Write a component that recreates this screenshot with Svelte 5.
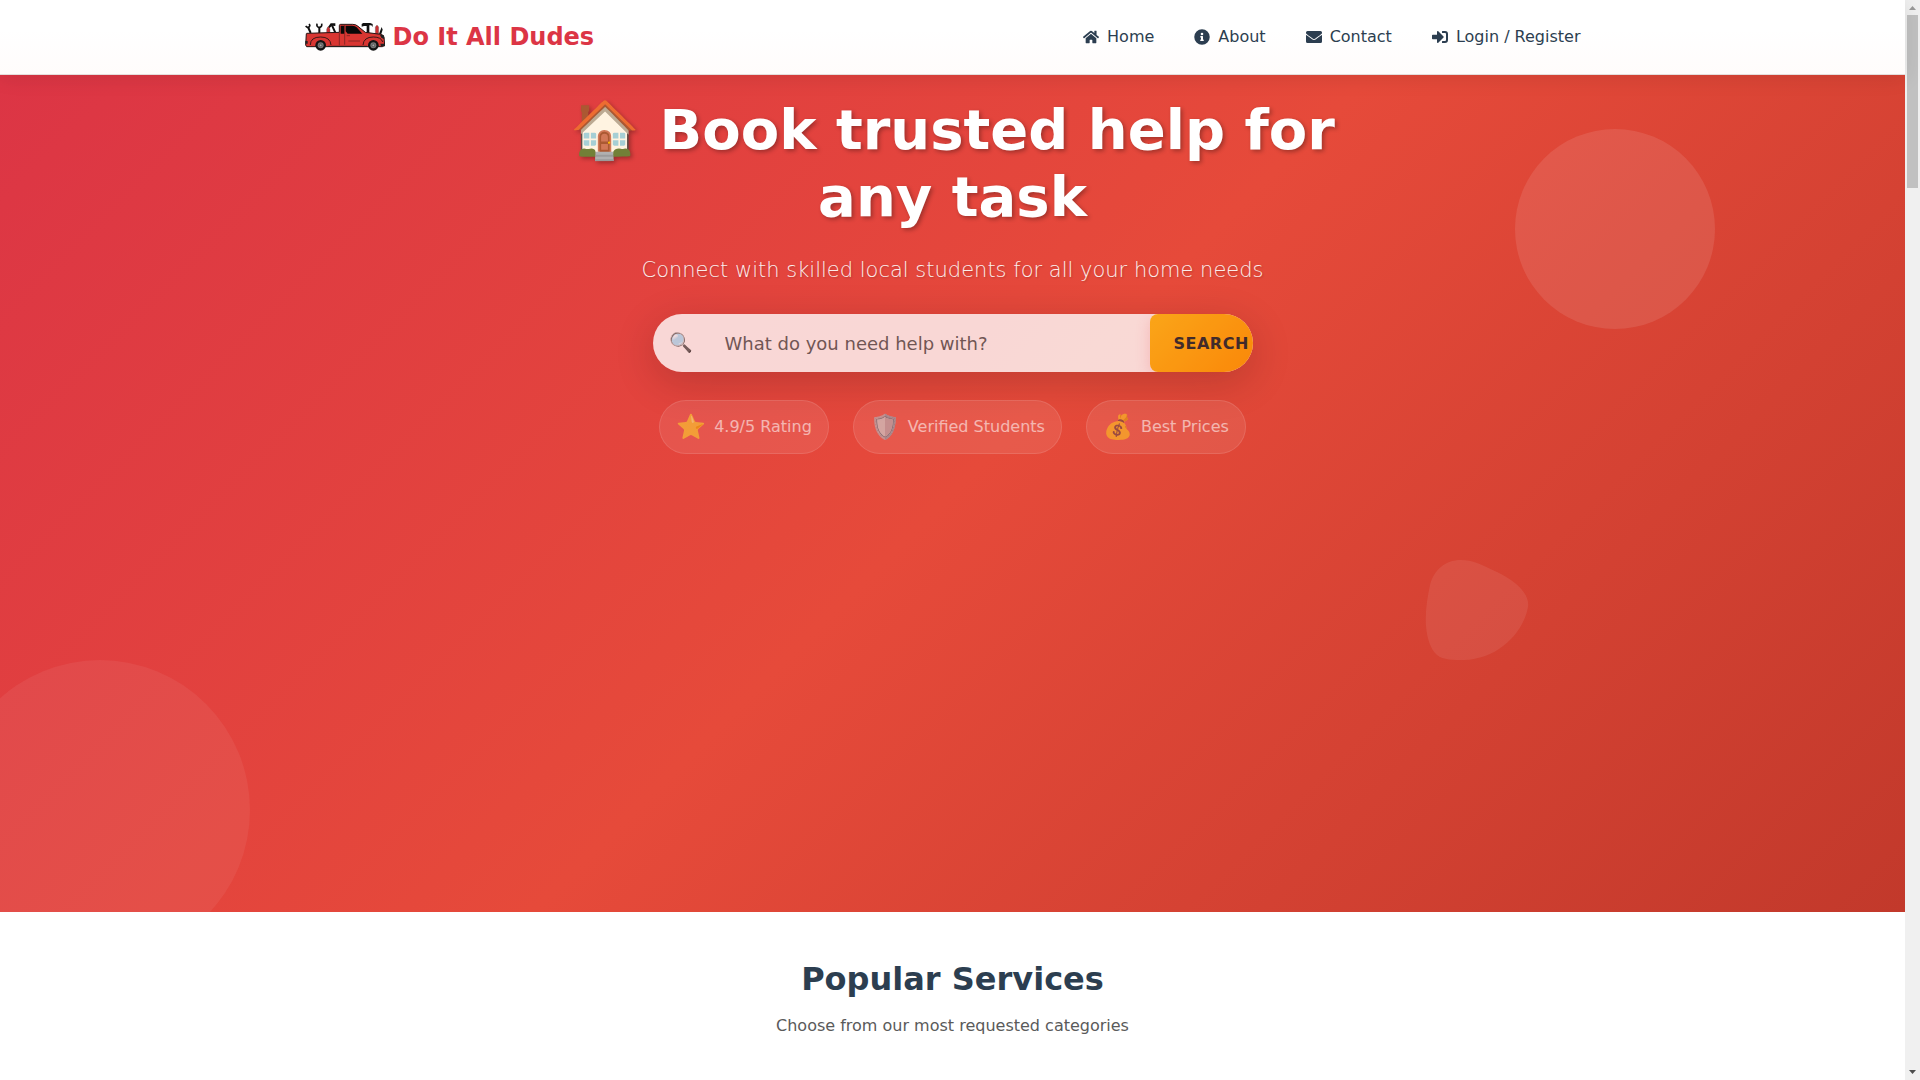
<script>
  let query = '';

  const links = [
    {
      label: 'Home',
      box: '0 0 576 512',
      path: 'M280 148 96 300v164a16 16 0 0 0 16 16l112-1a16 16 0 0 0 16-16v-95a16 16 0 0 1 16-16h64a16 16 0 0 1 16 16v95a16 16 0 0 0 16 16l112 1a16 16 0 0 0 16-16V300L296 148a12 12 0 0 0-16 0zM572 251l-84-69V44a12 12 0 0 0-12-12h-56a12 12 0 0 0-12 12v72l-90-74a48 48 0 0 0-61 0L4 251a12 12 0 0 0-2 17l26 31a12 12 0 0 0 17 2L280 107a12 12 0 0 1 16 0l235 194a12 12 0 0 0 17-2l26-31a12 12 0 0 0-2-17z',
    },
    {
      label: 'About',
      box: '0 0 512 512',
      path: 'M256 8a248 248 0 1 0 0 496 248 248 0 0 0 0-496zm0 110a42 42 0 1 1 0 84 42 42 0 0 1 0-84zm56 254a12 12 0 0 1-12 12h-88a12 12 0 0 1-12-12v-24a12 12 0 0 1 12-12h12v-64h-12a12 12 0 0 1-12-12v-24a12 12 0 0 1 12-12h64a12 12 0 0 1 12 12v100h12a12 12 0 0 1 12 12z',
    },
    {
      label: 'Contact',
      box: '0 0 512 512',
      path: 'M502 191c4-3 10 0 10 5v204a48 48 0 0 1-48 48H48a48 48 0 0 1-48-48V196c0-5 6-8 10-5 22 17 52 40 155 114 21 15 57 48 91 48 35 0 72-34 91-48 103-74 133-97 155-114zM256 320c23 0 57-29 74-42 133-96 143-105 173-129 6-4 9-11 9-18V112a48 48 0 0 0-48-48H48a48 48 0 0 0-48 48v19c0 7 3 14 9 18 30 24 40 33 173 129 17 13 51 42 74 42z',
    },
    {
      label: 'Login / Register',
      box: '0 0 512 512',
      path: 'M416 448h-84a12 12 0 0 1-12-12v-40a12 12 0 0 1 12-12h84a32 32 0 0 0 32-32V160a32 32 0 0 0-32-32h-84a12 12 0 0 1-12-12V76a12 12 0 0 1 12-12h84a96 96 0 0 1 96 96v192a96 96 0 0 1-96 96zm-47-209L201 71c-15-15-41-5-41 17v96H24a24 24 0 0 0-24 24v96a24 24 0 0 0 24 24h136v96c0 22 26 32 41 17l168-168c9-9 9-25 0-34z',
    },
  ];

  const badges = [
    { icon: '⭐', text: '4.9/5 Rating' },
    { icon: '🛡️', text: 'Verified Students' },
    { icon: '💰', text: 'Best Prices' },
  ];
</script>

<div class="window">
  <div class="page">
    <header>
      <nav class="container">
        <a class="brand" href="#home">
          <svg class="truck" viewBox="0 0 240 84" aria-hidden="true">
            <!-- tools in the bed -->
            <g fill="none" stroke="#111" stroke-width="6">
              <path d="M9 12 17 30M43 12v18M81 7l11 24" />
              <path d="M2 9q5 6 10 3 5-4 0-9M36 2q-2 11 7 11 9-1 7-11" stroke-width="5" />
            </g>
            <path d="M67 15 77 1h14v8l-10-1-8 8zM170 3l6-4h17l10 4v9l-4-5h-6v26h-8V9h-8l-7 2z" fill="#111" />
            <path d="M65 30V18l5-8 5 8v12zM211 33V12l5-6 5 6v22z" fill="#c92f32" stroke="#555" />
            <path d="m222 32 8-20 3 8-5 16z" fill="#111" />
            <!-- body -->
            <path d="M5 31 103 28V8q0-4 4-4h36q10 0 16 6l22 18 46 6q8 1 10 8l2 25-7 4H5L2 66 4 32z" fill="#d93632" stroke="#251515" stroke-width="3" />
            <path d="M107 8h11v24h-11zM122 8h20q9 0 13 5l17 19h-44l-6-7z" fill="#080808" />
            <path d="M119 5v60M103 30v37M125 38h10M130 54h35" fill="none" stroke="#641f20" stroke-width="2" />
            <path d="M16 66q0-24 31-24 29 0 31 24M174 66q2-24 31-24 24 0 28 15" fill="none" stroke="#3a1818" stroke-width="3" />
            <path d="M225 36h11l2 13-9-5zM1 54h7v8H1zM226 62h14v8h-12z" fill="#222" />
            <path d="M70 70h116" stroke="#222" stroke-width="3" />
            {#each [47, 205] as cx}
              <circle {cx} cy="67" r="16" fill="#151515" />
              <circle {cx} cy="67" r="9" fill="#777" />
              <circle {cx} cy="67" r="4" fill="#aaa" stroke="#444" stroke-width="2" />
            {/each}
          </svg>
          Do It All Dudes
        </a>
        <ul>
          {#each links as link}
            <li>
              <a href="#{link.label}">
                <svg viewBox={link.box} aria-hidden="true"><path d={link.path} /></svg>
                {link.label}
              </a>
            </li>
          {/each}
        </ul>
      </nav>
    </header>

    <section class="hero">
      <div class="shape round"></div>
      <svg class="shape blob" viewBox="0 0 104 102" aria-hidden="true">
        <path d="M36 1C20 1 9 11 5 26C2 40 0 55 1 67C2 80 6 91 12 96C18 101 29 101 39 101C72 100 98 75 103 48C105 35 91 22 72 13C55 5 48 1 36 1Z" />
      </svg>
      <div class="shape corner"></div>

      <div class="hero-content">
        <h1>🏠 Book trusted help for any task</h1>
        <p class="subtitle">Connect with skilled local students for all your home needs</p>
        <form class="search" on:submit|preventDefault>
          <label for="query">🔍</label>
          <input id="query" bind:value={query} placeholder="What do you need help with?" autocomplete="off" />
          <button type="submit">SEARCH</button>
        </form>
        <div class="badges">
          {#each badges as badge}
            <div class="badge"><span>{badge.icon}</span>{badge.text}</div>
          {/each}
        </div>
      </div>
    </section>

    <section class="services">
      <h2>Popular Services</h2>
      <p>Choose from our most requested categories</p>
    </section>
  </div>

  <div class="scrollbar" aria-hidden="true">
    <svg viewBox="0 0 15 15"><path d="M4 10h7L7.500 6z" fill="#999" /></svg>
    <div class="thumb"></div>
    <svg class="down" viewBox="0 0 15 15"><path d="M4 5h7L7.500 9z" fill="#4d4d4d" /></svg>
  </div>
</div>

<style>
  :global(body) {
    background: #fff;
    color: #2c3e50;
    font-family: 'DejaVu Sans', sans-serif;
    font-size: 16px;
    line-height: 24px;
  }
  .window {
    display: flex;
    height: 100vh;
    overflow: hidden;
  }
  .page {
    flex: 1;
    min-width: 0;
  }
  h1, h2, p, ul {
    margin: 0;
    padding: 0;
  }
  a {
    color: inherit;
    text-decoration: none;
  }
  header {
    position: relative;
    z-index: 1;
    background: linear-gradient(#fff 40%, #fffcfb);
    border-bottom: 1px solid #e4dedc;
    box-shadow: 0 2px 20px rgba(0, 0, 0, 0.1);
  }
  .container {
    display: flex;
    align-items: center;
    justify-content: space-between;
    box-sizing: border-box;
    max-width: 1320px;
    margin: 0 auto;
    padding: 16px 12px;
  }
  .brand {
    display: flex;
    align-items: center;
    gap: 8px;
    color: #dc3545;
    font-size: 24px;
    font-weight: 700;
    line-height: 42px;
  }
  .truck {
    width: 80px;
    height: 28px;
  }
  nav ul {
    display: flex;
    list-style: none;
  }
  nav li a {
    display: flex;
    align-items: center;
    gap: 8px;
    padding: 8px 20px;
  }
  nav li svg {
    width: 16px;
    height: 16px;
    fill: #2c3e50;
  }
  .hero {
    position: relative;
    min-height: 837px;
    overflow: hidden;
    background: linear-gradient(135deg, #dc3545 0%, #e64a3a 50%, #c2392b 100%);
    color: #fff;
    text-align: center;
  }
  .shape {
    position: absolute;
    background: rgba(255, 255, 255, 0.1);
    border-radius: 50%;
  }
  .round {
    top: 54px;
    right: 10%;
    width: 200px;
    height: 200px;
  }
  .blob {
    right: calc(20% - 5px);
    bottom: 30%;
    width: 104px;
    height: 102px;
    background: none;
    border-radius: 0;
    fill: rgba(255, 255, 255, 0.08);
  }
  .corner {
    left: -50px;
    bottom: -48px;
    width: 300px;
    height: 300px;
    background: rgba(255, 255, 255, 0.06);
  }
  .hero-content {
    position: relative;
    max-width: 800px;
    margin: 0 auto;
    padding-top: 21px;
  }
  h1 {
    font-size: 56px;
    font-weight: 800;
    line-height: 67px;
    text-shadow: 2px 2px 4px rgba(0, 0, 0, 0.3);
  }
  .subtitle {
    margin: 24px 0 28px;
    font-size: 21px;
    font-weight: 300;
    line-height: 32px;
    opacity: 0.9;
    text-shadow: 1px 1px 2px rgba(0, 0, 0, 0.2);
  }
  .search {
    display: flex;
    align-items: stretch;
    max-width: 600px;
    height: 58px;
    margin: 0 auto;
    overflow: hidden;
    border-radius: 29px;
    background: rgba(255, 255, 255, 0.95);
    box-shadow: 0 10px 40px rgba(0, 0, 0, 0.2);
    opacity: 0.83;
  }
  .search label {
    padding: 0 16px;
    font-size: 19px;
    line-height: 56px;
  }
  .search input {
    flex: 1;
    min-width: 0;
    padding: 0 16px;
    border: 0;
    outline: 0;
    background: none;
    color: #333;
    font: 18px 'DejaVu Sans', sans-serif;
  }
  .search input::placeholder {
    color: #5a5a5a;
  }
  .search button {
    flex: 0 0 103px;
    padding: 0 0 0 24px;
    border: 0;
    border-radius: 8px 0 0 8px;
    background: linear-gradient(135deg, #ffb812, #ff9500);
    box-shadow: 0 4px 15px rgba(220, 53, 69, 0.2);
    color: #212529;
    font: 700 16px 'DejaVu Sans', sans-serif;
    letter-spacing: 0.5px;
    text-align: left;
  }
  .badges {
    display: flex;
    justify-content: center;
    gap: 24px;
    margin-top: 28px;
    opacity: 0.6;
  }
  .badge {
    display: flex;
    align-items: center;
    gap: 8px;
    height: 52px;
    padding: 0 16px;
    border: 1px solid rgba(255, 255, 255, 0.2);
    border-radius: 27px;
    background: rgba(255, 255, 255, 0.15);
  }
  .badge span {
    font-size: 24px;
  }
  .services {
    padding: 48px 16px;
    background: #fff;
    text-align: center;
  }
  h2 {
    font-size: 32px;
    font-weight: 700;
    line-height: 38px;
  }
  .services p {
    margin-top: 16px;
    color: #5a5a5a;
  }
  .scrollbar {
    display: flex;
    flex: 0 0 15px;
    flex-direction: column;
    background: #f0f0f0;
  }
  .scrollbar svg {
    width: 15px;
    height: 15px;
  }
  .thumb {
    height: 16%;
    margin: 0 2px;
    background: #c1c1c1;
  }
  .down {
    margin-top: auto;
  }
</style>
